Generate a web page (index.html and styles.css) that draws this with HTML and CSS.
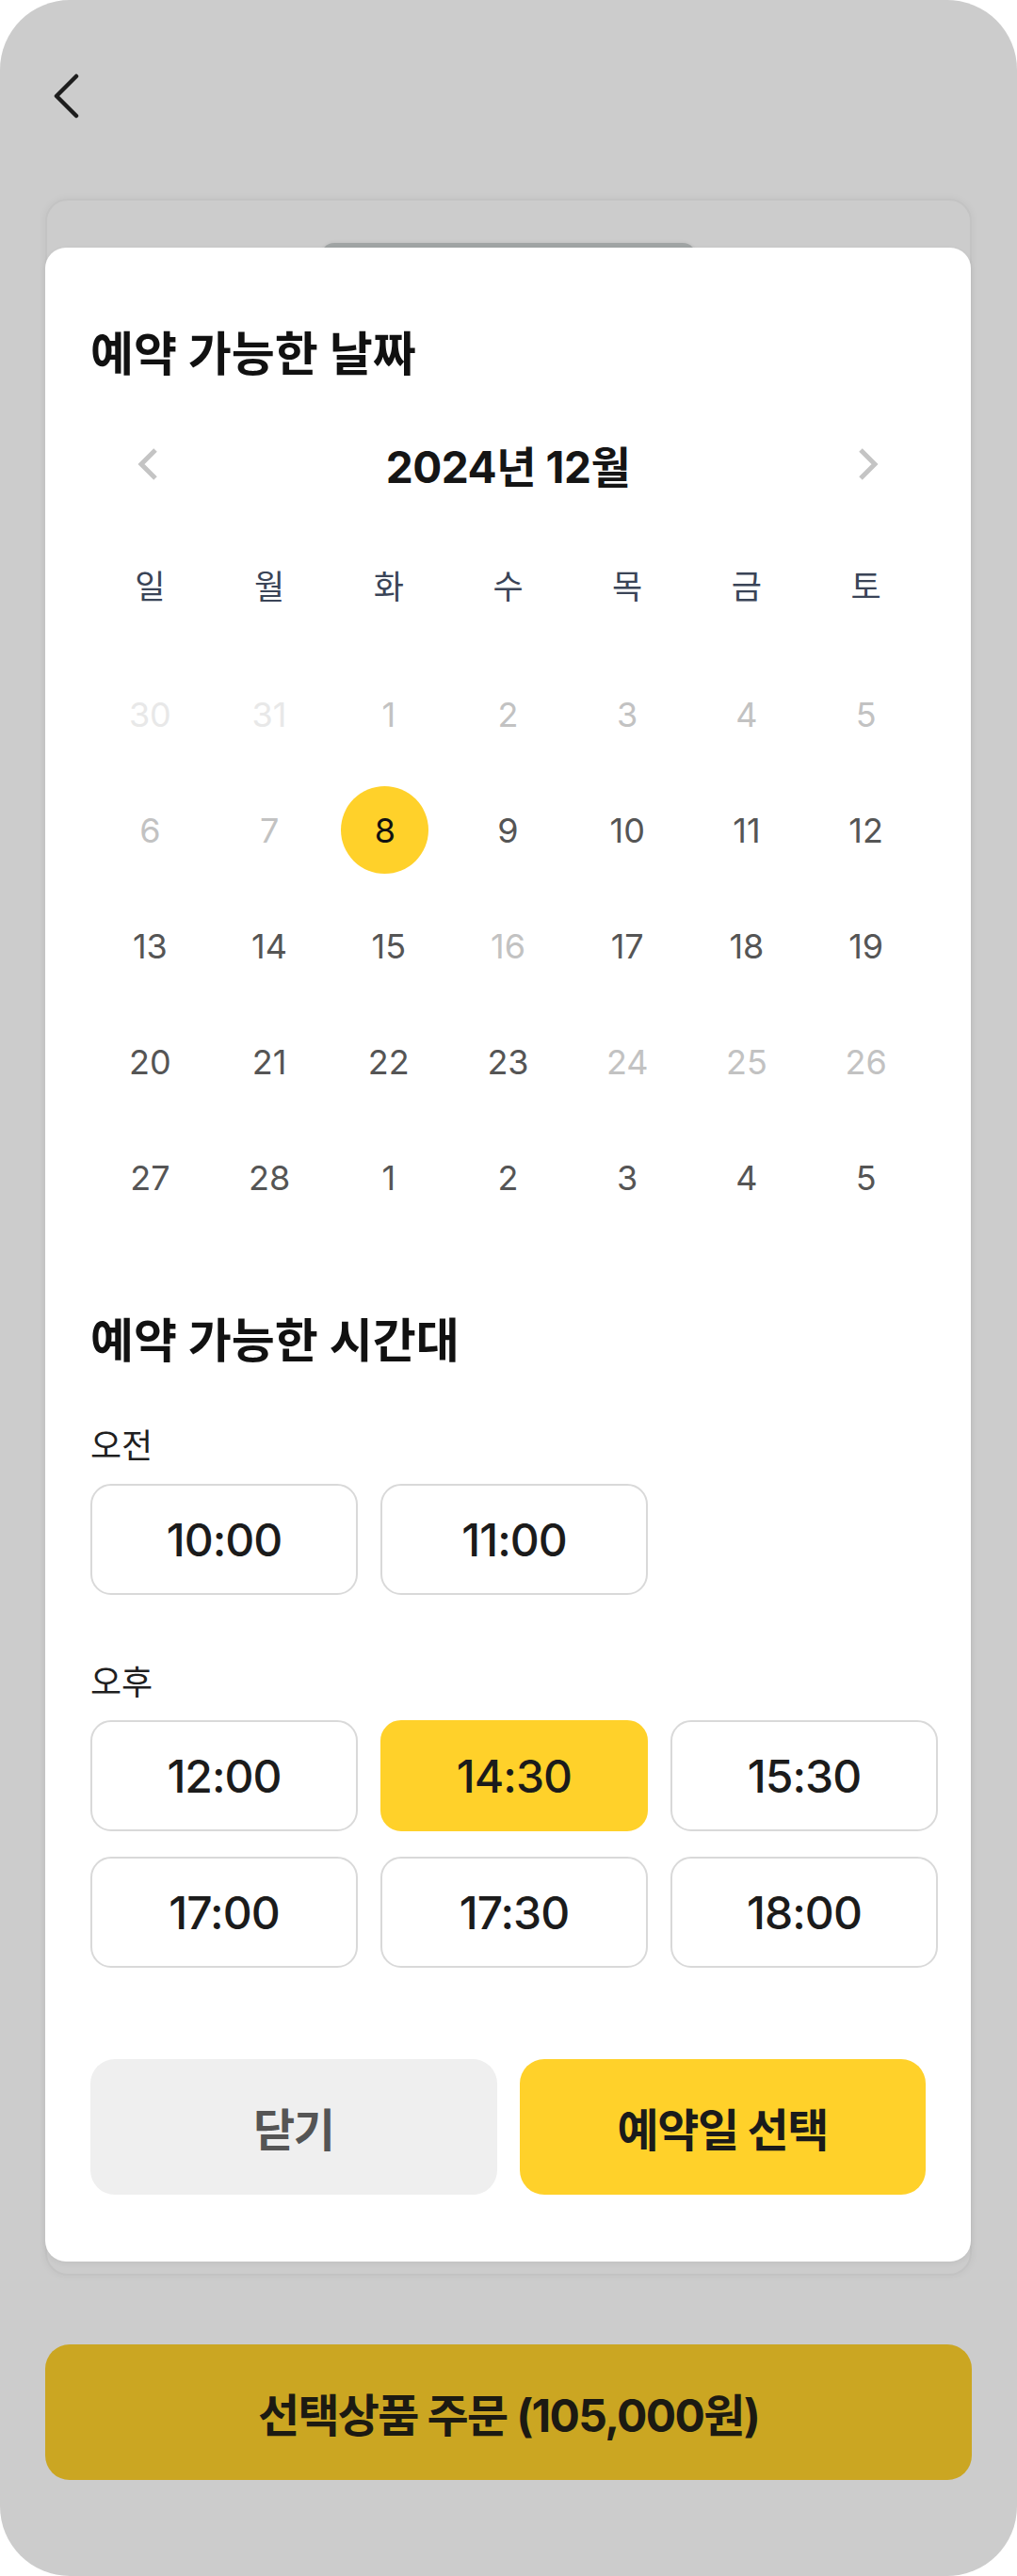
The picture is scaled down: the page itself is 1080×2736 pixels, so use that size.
FILE: index.html
```html
<!DOCTYPE html>
<html lang="ko">
<head>
<meta charset="utf-8">
<title>예약 가능한 날짜</title>
<link rel="stylesheet" href="styles.css">
</head>
<body>
<div class="phone">
  <header class="topbar">
    <svg class="back" width="30" height="48" viewBox="0 0 30 48"><path d="M25 3 L4 24 L25 45" fill="none" stroke="#1d1d1d" stroke-width="4.5" stroke-linecap="round" stroke-linejoin="round"/></svg>
  </header>
  <section class="card">
    <div class="thumb"></div>
  </section>
  <button class="order">선택상품 주문 (105,000원)</button>

  <div class="sheet">
    <h2 class="title">예약 가능한 날짜</h2>
    <div class="month-nav">
      <svg width="24" height="36" viewBox="0 0 24 36"><path d="M20 3 L5 18 L20 33" fill="none" stroke="#c4c4c4" stroke-width="5"/></svg>
      <span class="month">2024년 12월</span>
      <svg width="24" height="36" viewBox="0 0 24 36"><path d="M4 3 L19 18 L4 33" fill="none" stroke="#c4c4c4" stroke-width="5"/></svg>
    </div>
    <div class="weekdays">
      <span>일</span><span>월</span><span>화</span><span>수</span><span>목</span><span>금</span><span>토</span>
    </div>
    <div class="days">
      <span class="day faint">30</span><span class="day faint">31</span><span class="day off">1</span><span class="day off">2</span><span class="day off">3</span><span class="day off">4</span><span class="day off">5</span>
      <span class="day off">6</span><span class="day off">7</span><span class="day"><b class="sel">8</b></span><span class="day">9</span><span class="day">10</span><span class="day">11</span><span class="day">12</span>
      <span class="day">13</span><span class="day">14</span><span class="day">15</span><span class="day off">16</span><span class="day">17</span><span class="day">18</span><span class="day">19</span>
      <span class="day">20</span><span class="day">21</span><span class="day">22</span><span class="day">23</span><span class="day off">24</span><span class="day off">25</span><span class="day off">26</span>
      <span class="day">27</span><span class="day">28</span><span class="day">1</span><span class="day">2</span><span class="day">3</span><span class="day">4</span><span class="day">5</span>
    </div>

    <h2 class="title title-time">예약 가능한 시간대</h2>
    <div class="period">오전</div>
    <div class="slots">
      <button class="slot">10:00</button><button class="slot">11:00</button>
    </div>
    <div class="period period-pm">오후</div>
    <div class="slots">
      <button class="slot">12:00</button><button class="slot active">14:30</button><button class="slot">15:30</button>
      <button class="slot">17:00</button><button class="slot">17:30</button><button class="slot">18:00</button>
    </div>

    <div class="actions">
      <button class="btn btn-close">닫기</button>
      <button class="btn btn-confirm">예약일 선택</button>
    </div>
  </div>
</div>
</body>
</html>
```

FILE: styles.css
```css
* { box-sizing: border-box; }

html, body {
  margin: 0;
  padding: 0;
  background: #ffffff;
}

body {
  font-family: Inter, "Noto Sans CJK KR", "Noto Sans", sans-serif;
  color: #1b1b1b;
}

.phone {
  position: relative;
  width: 1080px;
  height: 2736px;
  border-radius: 74px;
  background: #cccccc;
  overflow: hidden;
  display: flex;
  flex-direction: column;
}

.topbar {
  height: 211px;
  padding: 78px 0 0 56px;
}

.back { display: block; }

.card {
  margin: 0 48px;
  height: 2206px;
  border: 2px solid #c3c3c3;
  border-radius: 24px;
  background: #cccccc;
  box-shadow: 0 0 8px rgba(0, 0, 0, 0.05);
  display: flex;
  justify-content: center;
  padding-top: 45px;
}

.thumb {
  width: 398px;
  height: 120px;
  background: #a0a4a4;
  border-radius: 14px;
  box-shadow: 0 0 4px rgba(0,0,0,0.08);
}

.order {
  margin: 73px 48px 0;
  height: 144px;
  border: 0;
  border-radius: 26px;
  background: #cba622;
  font-family: inherit;
  font-size: 48px;
  font-weight: 700;
  letter-spacing: -0.035em;
  color: #1c1a12;
}

/* bottom sheet / dialog over the dimmed page */
.sheet {
  position: absolute;
  top: 263px;
  left: 48px;
  width: 983px;
  background: #ffffff;
  border-radius: 22px;
  padding: 79px 48px 71px;
  box-shadow: 0 2px 6px rgba(0,0,0,0.06);
}

.title {
  margin: 0;
  height: 60px;
  display: flex;
  align-items: center;
  font-size: 50px;
  font-weight: 700;
  letter-spacing: 0;
  color: #111111;
}

.month-nav {
  margin-top: 51px;
  height: 80px;
  padding: 0 49px;
  display: flex;
  align-items: center;
  justify-content: space-between;
}

.month-nav svg { display: block; }

.month {
  font-size: 46px;
  font-weight: 700;
  letter-spacing: -0.01em;
  color: #151515;
}

.weekdays {
  margin-top: 57px;
  height: 60px;
  display: grid;
  grid-template-columns: repeat(7, 1fr);
  align-items: center;
  justify-items: center;
  font-size: 35px;
  color: #3a4457;
}

.days {
  margin-top: 62px;
  display: grid;
  grid-template-columns: repeat(7, 1fr);
  grid-auto-rows: 93px;
  row-gap: 30px;
  font-size: 36px;
  color: #555555;
}

.day {
  display: flex;
  align-items: center;
  justify-content: center;
}

.day.off { color: #c2c2c2; }
.day.faint { color: #e8e8e8; }

.sel {
  width: 93px;
  height: 93px;
  border-radius: 50%;
  background: #ffd12a;
  color: #111111;
  font-weight: 400;
  display: flex;
  align-items: center;
  justify-content: center;
  margin-right: 8px;
}

.title-time { margin-top: 93px; }

.period {
  margin-top: 58px;
  height: 50px;
  display: flex;
  align-items: center;
  font-size: 36px;
  color: #1f1f1f;
}

.period-pm { margin-top: 65px; }

.slots {
  margin-top: 18px;
  display: grid;
  grid-template-columns: repeat(3, 284px);
  grid-auto-rows: 118px;
  column-gap: 24px;
  row-gap: 27px;
}

.slot {
  border: 2px solid #d9d9d9;
  border-radius: 22px;
  background: #ffffff;
  font-family: inherit;
  font-size: 48px;
  font-weight: 500;
  letter-spacing: -0.02em;
  color: #1b1b1b;
  padding: 0;
}

.slot.active {
  background: #ffd12a;
  border-color: #ffd12a;
}

.actions {
  margin-top: 97px;
  display: grid;
  grid-template-columns: 1fr 1fr;
  column-gap: 24px;
}

.btn {
  height: 144px;
  border: 0;
  border-radius: 26px;
  font-family: inherit;
  font-size: 48px;
  font-weight: 700;
  letter-spacing: -0.03em;
}

.btn-close {
  background: #efefef;
  color: #555555;
}

.btn-confirm {
  background: #ffd12a;
  color: #1b1b1b;
}
```
